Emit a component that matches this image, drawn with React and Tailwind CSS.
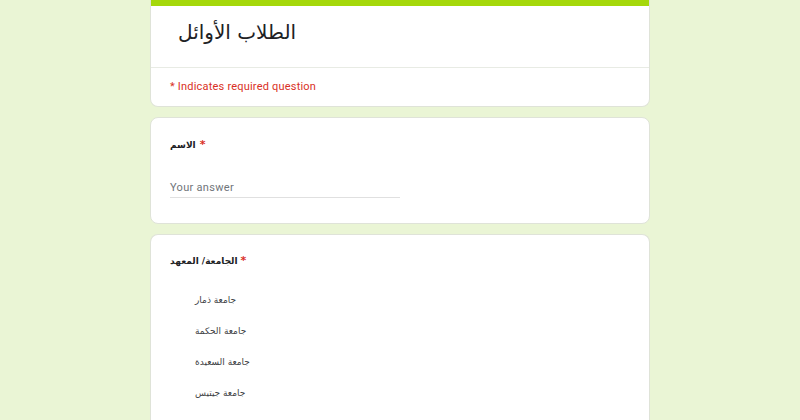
export default function App() {
  const options = ['جامعة ذمار', 'جامعة الحكمة', 'جامعة السعيدة', 'جامعة جيتيس'];

  return (
    <div className="min-h-[420px] h-[420px] overflow-hidden bg-[#eaf5d5] font-['Roboto','DejaVu_Sans',sans-serif]">
      <div className="mx-auto w-[500px] flex flex-col gap-[10px]">
        <div className="bg-white rounded-b-lg border border-[#dfe3d8] border-t-0 overflow-hidden">
          <div className="h-[6px] bg-[#a5d80b]" />
          <div className="h-[62px] border-b border-[#e8ebe4] px-[27px] pt-[13px]">
            <h1 className="text-[20px] leading-[26px] text-[#202124] font-['DejaVu_Sans',sans-serif]">الطلاب الأوائل</h1>
          </div>
          <div className="h-[38px] px-[19px] pt-[11px] text-[11px] leading-[16px] tracking-[0.2px] text-[#d93025]">
            * Indicates required question
          </div>
        </div>

        <div className="bg-white rounded-lg border border-[#dfe3d8] h-[107px] px-[19px] pt-[19px]">
          <div className="text-[9px] leading-[16px] font-bold text-[#202124] font-['DejaVu_Sans',sans-serif]">
            الاسم <span className="ml-[1px] text-[11px] text-[#d93025]">*</span>
          </div>
          <div className="mt-[27px] w-[230px] border-b border-[#e0e0e0] pb-[1px] text-[11px] leading-[16px] tracking-[0.3px] text-[#70757a]">
            Your answer
          </div>
        </div>

        <div className="bg-white rounded-t-lg border border-[#dfe3d8] border-b-0 h-[200px] px-[19px] pt-[18px]">
          <div className="text-[9px] leading-[16px] font-bold text-[#202124] font-['DejaVu_Sans',sans-serif]">
            الجامعة/ المعهد<span className="ml-[3px] text-[11px] text-[#d93025]">*</span>
          </div>
          <div className="mt-[24px] pl-[25px] flex flex-col gap-[17px]">
            {options.map((o) => (
              <div key={o} className="text-[9px] leading-[14px] text-[#3c4043] font-['DejaVu_Sans',sans-serif]">
                {o}
              </div>
            ))}
          </div>
        </div>
      </div>
    </div>
  );
}
